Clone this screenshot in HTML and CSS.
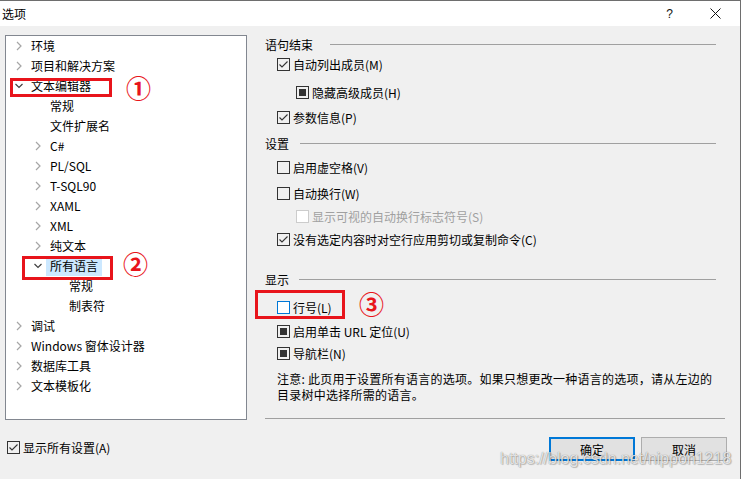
FILE: index.html
```html
<!DOCTYPE html>
<html lang="zh-CN">
<head>
<meta charset="utf-8">
<title>选项</title>
<link rel="stylesheet" href="styles.css">
</head>
<body>
<div class="window">
  <div class="titlebar">
    <span class="title">选项</span>
    <span class="help">?</span>
    <span class="close"><svg width="11" height="11" viewBox="0 0 11 11"><path d="M0.5 0.5L10.5 10.5M10.5 0.5L0.5 10.5" stroke="#111" stroke-width="1" fill="none"/></svg></span>
  </div>

  <div class="main">
    <div class="tree">
      <div class="row l0"><span class="chev"><svg width="16" height="16" viewBox="0 0 16 16"><polyline points="6,4 10,8 6,12" class="cc"/></svg></span><span class="lbl">环境</span></div>
      <div class="row l0"><span class="chev"><svg width="16" height="16" viewBox="0 0 16 16"><polyline points="6,4 10,8 6,12" class="cc"/></svg></span><span class="lbl">项目和解决方案</span></div>
      <div class="row l0"><span class="chev"><svg width="16" height="16" viewBox="0 0 16 16"><polyline points="4.5,6 8,9.5 11.5,6" class="ce"/></svg></span><span class="lbl">文本编辑器</span></div>
      <div class="row l1"><span class="chev"></span><span class="lbl">常规</span></div>
      <div class="row l1"><span class="chev"></span><span class="lbl">文件扩展名</span></div>
      <div class="row l1"><span class="chev"><svg width="16" height="16" viewBox="0 0 16 16"><polyline points="6,4 10,8 6,12" class="cc"/></svg></span><span class="lbl">C#</span></div>
      <div class="row l1"><span class="chev"><svg width="16" height="16" viewBox="0 0 16 16"><polyline points="6,4 10,8 6,12" class="cc"/></svg></span><span class="lbl">PL/SQL</span></div>
      <div class="row l1"><span class="chev"><svg width="16" height="16" viewBox="0 0 16 16"><polyline points="6,4 10,8 6,12" class="cc"/></svg></span><span class="lbl">T-SQL90</span></div>
      <div class="row l1"><span class="chev"><svg width="16" height="16" viewBox="0 0 16 16"><polyline points="6,4 10,8 6,12" class="cc"/></svg></span><span class="lbl">XAML</span></div>
      <div class="row l1"><span class="chev"><svg width="16" height="16" viewBox="0 0 16 16"><polyline points="6,4 10,8 6,12" class="cc"/></svg></span><span class="lbl">XML</span></div>
      <div class="row l1"><span class="chev"><svg width="16" height="16" viewBox="0 0 16 16"><polyline points="6,4 10,8 6,12" class="cc"/></svg></span><span class="lbl">纯文本</span></div>
      <div class="row l1"><span class="chev"><svg width="16" height="16" viewBox="0 0 16 16"><polyline points="4.5,6 8,9.5 11.5,6" class="ce"/></svg></span><span class="lbl sel">所有语言</span></div>
      <div class="row l2"><span class="chev"></span><span class="lbl">常规</span></div>
      <div class="row l2"><span class="chev"></span><span class="lbl">制表符</span></div>
      <div class="row l0"><span class="chev"><svg width="16" height="16" viewBox="0 0 16 16"><polyline points="6,4 10,8 6,12" class="cc"/></svg></span><span class="lbl">调试</span></div>
      <div class="row l0"><span class="chev"><svg width="16" height="16" viewBox="0 0 16 16"><polyline points="6,4 10,8 6,12" class="cc"/></svg></span><span class="lbl">Windows 窗体设计器</span></div>
      <div class="row l0"><span class="chev"><svg width="16" height="16" viewBox="0 0 16 16"><polyline points="6,4 10,8 6,12" class="cc"/></svg></span><span class="lbl">数据库工具</span></div>
      <div class="row l0"><span class="chev"><svg width="16" height="16" viewBox="0 0 16 16"><polyline points="6,4 10,8 6,12" class="cc"/></svg></span><span class="lbl">文本模板化</span></div>
    </div>

    <div class="pane">
      <div class="group"><span class="glabel gw1">语句结束</span><span class="gline"></span></div>
      <div class="opt o1 m2"><span class="cb"><svg width="11" height="11" viewBox="0 0 11 11"><polyline points="1.5,5.5 4,8 9.5,2.5" class="ck"/></svg></span>自动列出成员(M)</div>
      <div class="opt o2 m10"><span class="cb ind"><span class="dot"></span></span>隐藏高级成员(H)</div>
      <div class="opt o1 m7"><span class="cb"><svg width="11" height="11" viewBox="0 0 11 11"><polyline points="1.5,5.5 4,8 9.5,2.5" class="ck"/></svg></span>参数信息(P)</div>

      <div class="group m8"><span class="glabel gw2">设置</span><span class="gline"></span></div>
      <div class="opt o1 m6"><span class="cb"></span>启用虚空格(V)</div>
      <div class="opt o1 m8"><span class="cb"></span>自动换行(W)</div>
      <div class="opt o2 m5 disabled"><span class="cb"></span>显示可视的自动换行标志符号(S)</div>
      <div class="opt o1 m5"><span class="cb"><svg width="11" height="11" viewBox="0 0 11 11"><polyline points="1.5,5.5 4,8 9.5,2.5" class="ck"/></svg></span>没有选定内容时对空行应用剪切或复制命令(C)</div>

      <div class="group m22"><span class="glabel gw3">显示</span><span class="gline"></span></div>
      <div class="opt o1 m10"><span class="cb focus"></span>行号(L)</div>
      <div class="opt o1 m6"><span class="cb ind"><span class="dot"></span></span>启用单击 URL 定位(U)</div>
      <div class="opt o1 m4"><span class="cb ind"><span class="dot"></span></span>导航栏(N)</div>
      <p class="note">注意: 此页用于设置所有语言的选项。如果只想更改一种语言的选项，请从左边的<br>目录树中选择所需的语言。</p>
      <div class="rule"></div>
    </div>
  </div>

  <div class="footer">
    <div class="opt showall"><span class="cb"><svg width="11" height="11" viewBox="0 0 11 11"><polyline points="1.5,5.5 4,8 9.5,2.5" class="ck"/></svg></span>显示所有设置(A)</div>
    <div class="buttons">
      <button class="btn primary">确定</button>
      <button class="btn">取消</button>
    </div>
  </div>

  <div class="mark mark1"></div>
  <div class="mark mark2"></div>
  <div class="mark mark3"></div>
  <span class="num num1">①</span>
  <span class="num num2">②</span>
  <span class="num num3">③</span>
  <span class="watermark">https://blog.csdn.net/nippon1218</span>
</div>
</body>
</html>
```

FILE: styles.css
```css
html, body {
  margin: 0;
  padding: 0;
  background: #f0f0f0;
}
body {
  font-family: "Noto Sans CJK SC", "Noto Sans", sans-serif;
  font-size: 12px;
  color: #000;
}
.window {
  position: relative;
  width: 741px;
  height: 479px;
  box-sizing: border-box;
  border-top: 1px solid #6e6e6e;
  border-right: 1px solid #6e6e6e;
  background: #f0f0f0;
  overflow: hidden;
}
.titlebar {
  height: 25px;
  background: #fff;
  display: flex;
  align-items: center;
  position: relative;
}
.title {
  padding-left: 2px;
  line-height: 25px;
}
.help {
  margin-left: auto;
  margin-right: 37px;
  font-size: 12px;
  font-family: "Liberation Sans", sans-serif;
  color: #111;
}
.close {
  display: flex;
  margin-right: 19px;
}

.main {
  display: flex;
  padding-top: 9px;
  height: 385px;
}
.tree {
  margin-left: 5px;
  width: 242px;
  height: 385px;
  box-sizing: border-box;
  border: 1px solid #828790;
  background: #fff;
  flex: none;
}
.row {
  height: 20px;
  display: flex;
  align-items: center;
}
.row.l0 { padding-left: 5px; }
.row.l1 { padding-left: 24px; }
.row.l2 { padding-left: 43px; }
.chev {
  width: 16px;
  height: 16px;
  display: flex;
  flex: none;
}
.cc {
  fill: none;
  stroke: #a6a6a6;
  stroke-width: 1.2;
}
.ce {
  fill: none;
  stroke: #404040;
  stroke-width: 1.2;
}
.lbl {
  padding: 0 4px;
  line-height: 20px;
  height: 20px;
  white-space: nowrap;
}
.lbl.sel {
  background: #cce8ff;
}

.pane {
  flex: 1;
  padding-left: 18px;
  padding-right: 24px;
}
.group {
  display: flex;
  align-items: center;
  height: 18px;
}
.glabel {
  flex: none;
}
.gw1 { width: 65px; }
.gw2 { width: 35px; }
.gw3 { width: 34px; }
.gline {
  flex: 1;
  height: 1px;
  background: #a0a0a0;
}
.opt {
  display: flex;
  align-items: center;
  height: 18px;
  white-space: nowrap;
}
.o1 { padding-left: 12px; }
.o2 { padding-left: 31px; }
.m2 { margin-top: 2px; }
.m4 { margin-top: 4px; }
.m5 { margin-top: 5px; }
.m6 { margin-top: 6px; }
.m7 { margin-top: 7px; }
.m8 { margin-top: 8px; }
.m10 { margin-top: 10px; }
.m22 { margin-top: 22px; }
.cb {
  width: 13px;
  height: 13px;
  box-sizing: border-box;
  border: 1px solid #333;
  margin-right: 3px;
  display: flex;
  align-items: center;
  justify-content: center;
  flex: none;
}
.ck {
  fill: none;
  stroke: #333;
  stroke-width: 1.1;
}
.cb.ind .dot {
  width: 7px;
  height: 7px;
  background: #333;
}
.cb.focus {
  border-color: #0078d7;
  background: #fff;
}
.disabled {
  color: #a0a0a0;
}
.disabled .cb {
  border-color: #cccccc;
  background: #fff;
}
.note {
  margin: 9px 0 0 12px;
  line-height: 16px;
  letter-spacing: 0.25px;
  white-space: nowrap;
}
.rule {
  margin-top: 15px;
  margin-right: -9px;
  height: 1px;
  background: #a0a0a0;
}

.footer {
  display: flex;
  align-items: center;
  height: 24px;
  margin-top: 17px;
  padding-left: 7px;
  padding-right: 13px;
}
.showall {
  margin-top: -3px;
}
.buttons {
  margin-left: auto;
  display: flex;
  gap: 6px;
}
.btn {
  width: 86px;
  height: 24px;
  box-sizing: border-box;
  background: #e1e1e1;
  border: 1px solid #adadad;
  font-family: "Noto Sans CJK SC", sans-serif;
  font-size: 12px;
  color: #000;
  padding: 0;
}
.btn.primary {
  border: 2px solid #0078d7;
}

.mark {
  position: absolute;
  box-sizing: border-box;
  border: 3px solid #e8141b;
}
.mark1 { left: 10px; top: 77px; width: 102px; height: 19px; }
.mark2 { left: 22px; top: 255px; width: 91px; height: 24px; }
.mark3 { left: 255px; top: 289px; width: 90px; height: 29px; }
.num {
  position: absolute;
  color: #e8141b;
  font-family: "Noto Sans CJK SC", sans-serif;
  font-weight: 700;
  font-size: 25px;
  line-height: 26px;
}
.num1 { left: 126px; top: 73px; }
.num2 { left: 123px; top: 249px; }
.num3 { left: 359px; top: 289px; }
.watermark {
  position: absolute;
  left: 500px;
  top: 449px;
  font-family: "Liberation Sans", sans-serif;
  font-size: 16px;
  color: rgba(255, 255, 255, 0.8);
  text-shadow: 0 0 1px rgba(0, 0, 0, 0.5), 1px 1px 1px rgba(0, 0, 0, 0.2);
  white-space: nowrap;
}
```
